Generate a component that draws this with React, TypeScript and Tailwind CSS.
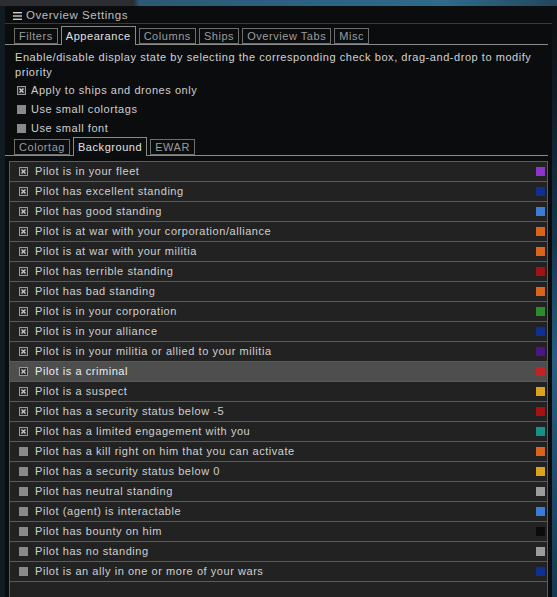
import React from 'react';

const rows: { label: string; checked: boolean; color: string }[] = [
  { label: 'Pilot is in your fleet', checked: true, color: '#8d35c9' },
  { label: 'Pilot has excellent standing', checked: true, color: '#10308f' },
  { label: 'Pilot has good standing', checked: true, color: '#3d7bd9' },
  { label: 'Pilot is at war with your corporation/alliance', checked: true, color: '#d8651b' },
  { label: 'Pilot is at war with your militia', checked: true, color: '#d8651b' },
  { label: 'Pilot has terrible standing', checked: true, color: '#a31313' },
  { label: 'Pilot has bad standing', checked: true, color: '#d8651b' },
  { label: 'Pilot is in your corporation', checked: true, color: '#2b8c2b' },
  { label: 'Pilot is in your alliance', checked: true, color: '#10308f' },
  { label: 'Pilot is in your militia or allied to your militia', checked: true, color: '#4b1682' },
  { label: 'Pilot is a criminal', checked: true, color: '#c42222' },
  { label: 'Pilot is a suspect', checked: true, color: '#dba21f' },
  { label: 'Pilot has a security status below -5', checked: true, color: '#a31313' },
  { label: 'Pilot has a limited engagement with you', checked: true, color: '#159189' },
  { label: 'Pilot has a kill right on him that you can activate', checked: false, color: '#d8651b' },
  { label: 'Pilot has a security status below 0', checked: false, color: '#dba21f' },
  { label: 'Pilot has neutral standing', checked: false, color: '#9c9c9c' },
  { label: 'Pilot (agent) is interactable', checked: false, color: '#3d7bd9' },
  { label: 'Pilot has bounty on him', checked: false, color: '#0b0b0b' },
  { label: 'Pilot has no standing', checked: false, color: '#9c9c9c' },
  { label: 'Pilot is an ally in one or more of your wars', checked: false, color: '#10308f' },
];

const font = { fontFamily: '"Liberation Sans", Arial, sans-serif' };

function Check({ checked }: { checked: boolean }) {
  if (!checked) return <div className="w-[9px] h-[9px] bg-[#8a8a8a] shrink-0" />;
  return (
    <svg width="9" height="9" viewBox="0 0 9 9" className="shrink-0">
      <rect x="0.5" y="0.5" width="8" height="8" fill="#2a2a2a" stroke="#9a9a9a" />
      <path d="M2.5 2.5 L6.5 6.5 M6.5 2.5 L2.5 6.5" stroke="#d0d0d0" strokeWidth="1.3" />
    </svg>
  );
}

function Tab({ label, active }: { label: string; active?: boolean }) {
  return (
    <div
      className={`px-[4px] border border-[#6e6e6e] ${
        active
          ? 'border-b-0 border-[#8a8a8a] h-[19px] text-[#e2e2e2] bg-[#0c0d0f] -mb-px pt-[1px]'
          : 'h-[16px] text-[#9c9c9c] leading-[15px]'
      }`}
    >
      {label}
    </div>
  );
}

function TabRow({ tabs, active }: { tabs: string[]; active: string }) {
  return (
    <div className="flex items-end gap-[3px] pl-[9px] border-b border-[#8a8a8a]">
      {tabs.map((t) => (
        <Tab key={t} label={t} active={t === active} />
      ))}
    </div>
  );
}

export default function App() {
  return (
    <div
      className="w-[557px] h-[597px] overflow-hidden bg-[#0d141a] text-[11px] tracking-[0.55px] text-[#c9c9c9] flex flex-col"
      style={font}
    >
      {/* backdrop strip */}
      <div className="h-[6px] shrink-0 bg-[linear-gradient(90deg,#2b2d30_0%,#2b2d30_24%,#2a5876_25%,#2f6a8a_80%,#22465e_100%)]" />
      <div className="flex flex-1 min-h-0">
        <div className="w-[5px] shrink-0 bg-[#111b22]" />
        {/* window */}
        <div className="flex-1 flex flex-col bg-[#0b0c0e] min-h-0">
          <div className="h-[18px] pt-[2px] flex items-center gap-[4px] pl-[8px] text-[#bdbdbd] border-b border-[#3a3a3a]">
            <svg width="9" height="8" viewBox="0 0 9 8">
              <rect x="0" y="0" width="9" height="1.4" fill="#cfcfcf" />
              <rect x="0" y="3.3" width="9" height="1.4" fill="#cfcfcf" />
              <rect x="0" y="6.6" width="9" height="1.4" fill="#cfcfcf" />
            </svg>
            <span className="text-[11.5px]">Overview Settings</span>
          </div>
          <div className="pt-[2px] pr-[4px]">
            <TabRow tabs={['Filters', 'Appearance', 'Columns', 'Ships', 'Overview Tabs', 'Misc']} active="Appearance" />
          </div>
          <div className="pl-[10px] pt-[5px] leading-[15px] text-[#d2d2d2]">
            Enable/disable display state by selecting the corresponding check box, drag-and-drop to modify
            <br />
            priority
          </div>
          <div className="pl-[12px] pt-[1px] flex flex-col text-[#cfcfcf]">
            {[
              ['Apply to ships and drones only', true],
              ['Use small colortags', false],
              ['Use small font', false],
            ].map(([l, c]) => (
              <div key={l as string} className="h-[19px] flex items-center gap-[5px]">
                <Check checked={c as boolean} />
                <span>{l as string}</span>
              </div>
            ))}
          </div>
          <div className="pr-[4px] -mt-[1px]">
            <TabRow tabs={['Colortag', 'Background', 'EWAR']} active="Background" />
          </div>
          <div className="ml-[4px] mr-[4px] mt-[5px] flex-1 border border-[#5c5c5c] border-b-0 bg-[#202020] flex flex-col">
            {rows.map((r) => {
              const sel = r.label === 'Pilot is a criminal';
              return (
                <div
                  key={r.label}
                  className={`h-[20px] shrink-0 flex items-center pl-[9px] pr-[2px] border-b border-[#5a5a5a] ${
                    sel ? 'bg-[#4e4e4e] text-[#ececec]' : 'bg-[#222222] text-[#d0d0d0]'
                  }`}
                >
                  <Check checked={r.checked} />
                  <span className="ml-[7px] flex-1">{r.label}</span>
                  <div className="w-[9px] h-[9px]" style={{ backgroundColor: r.color }} />
                </div>
              );
            })}
            <div className="flex-1 bg-[#222222]" />
          </div>
        </div>
        <div className="w-[5px] shrink-0 bg-[linear-gradient(180deg,#0b0c0e_0%,#16384e_40%,#2a5f80_60%,#163a52_100%)]" />
      </div>
    </div>
  );
}
